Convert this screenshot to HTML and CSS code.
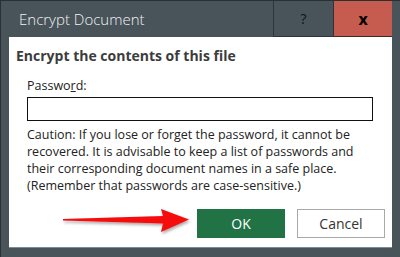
FILE: index.html
```html
<html lang="en">
<head>
  <meta charset="UTF-8">
  <title>Encrypt Document</title>
  <link rel="stylesheet" href="styles.css">
</head>
<body>
  <div id="window">
    <div class="titlebar">
      <span class="title">Encrypt Document</span>
      <span class="tb-button help">?</span>
      <span class="tb-button close">x</span>
    </div>
    <div class="content">
      <h3>Encrypt the contents of this file</h3>
      <div class="form">
        <label for="pw">Passwo<u>r</u>d:</label>
        <input id="pw" type="password">
        <p class="caution">Caution: If you lose or forget the password, it cannot be recovered. It is advisable to keep a list of passwords and their corresponding document names in a safe place. (Remember that passwords are case-sensitive.)</p>
      </div>
      <div class="buttons">
        <button class="ok">OK</button>
        <button class="cancel">Cancel</button>
      </div>
    </div>
    <div class="bottom-edge"></div>
    <!-- red annotation arrow pointing at OK -->
    <svg class="arrow" width="140" height="30" viewBox="0 0 140 30">
      <defs>
        <filter id="sh" x="-10%" y="-30%" width="130%" height="180%">
          <feDropShadow dx="1" dy="2" stdDeviation="1.5" flood-color="#000" flood-opacity="0.35"/>
        </filter>
      </defs>
      <polygon filter="url(#sh)" fill="#f50a0a" points="0,10 100,7 98,0 126,10.5 98,23 100,14.5 0,11.5"/>
    </svg>
  </div>
</body>
</html>
```
FILE: styles.css
```css
body {
  margin: 0;
  padding: 0;
  font-family: "Open Sans", "Noto Sans", sans-serif;
}
#window {
  position: relative;
  width: 400px;
  height: 257px;
  box-sizing: border-box;
  background-color: #48535a;
  border-top: 1px solid #2a2f33;
  border-left: 1px solid #2a2f33;
  display: flex;
  flex-direction: column;
  overflow: hidden;
}
.titlebar {
  display: flex;
  height: 36px;
  flex-shrink: 0;
}
.title {
  flex: 1;
  color: #f2f2f2;
  font-family: "Open Sans", sans-serif;
  font-weight: 300;
  font-size: 15px;
  padding: 8px 0 0 18px;
}
.tb-button {
  display: flex;
  align-items: center;
  justify-content: center;
  font-size: 14px;
}
.help {
  width: 59px;
  border: 1px solid #2e3438;
  border-top: none;
  color: #111;
}
.close {
  width: 58px;
  background-color: #c65b4f;
  border-bottom: 1px solid #3a2a28;
  color: #000;
  font-weight: bold;
  font-size: 16px;
  margin-right: 8px;
}
.content {
  background-color: #ffffff;
  margin: 0 8px 0 8px;
  height: 210px;
  padding: 9px 7px 0 7px;
  box-sizing: border-box;
  display: flex;
  flex-direction: column;
}
h3 {
  margin: 0;
  font-size: 14px;
  font-weight: bold;
  color: #3c3c3c;
  line-height: 20px;
}
.form {
  padding: 12px 11px 0 11px;
  display: flex;
  flex-direction: column;
}
label {
  font-size: 12.5px;
  color: #222;
  line-height: 16px;
}
input {
  margin-top: 3px;
  height: 24px;
  width: 346px;
  box-sizing: border-box;
  border: 1.5px solid #111;
  outline: none;
}
.caution {
  margin: 5px 0 0 0;
  font-size: 12.5px;
  line-height: 17px;
  color: #222;
}
.buttons {
  display: flex;
  justify-content: flex-end;
  gap: 12px;
  margin-top: 15px;
}
button {
  width: 88px;
  height: 29px;
  font-family: "Open Sans", sans-serif;
  font-size: 14px;
}
.ok {
  background-color: #217346;
  border: none;
  color: #ffffff;
}
.cancel {
  background-color: #ffffff;
  border: 1px solid #a9a9a9;
  color: #333;
}
.bottom-edge {
  margin: 0 8px;
  height: 1px;
  background-color: #7d8b96;
}
.arrow {
  position: absolute;
  left: 62px;
  top: 208px;
}
```
